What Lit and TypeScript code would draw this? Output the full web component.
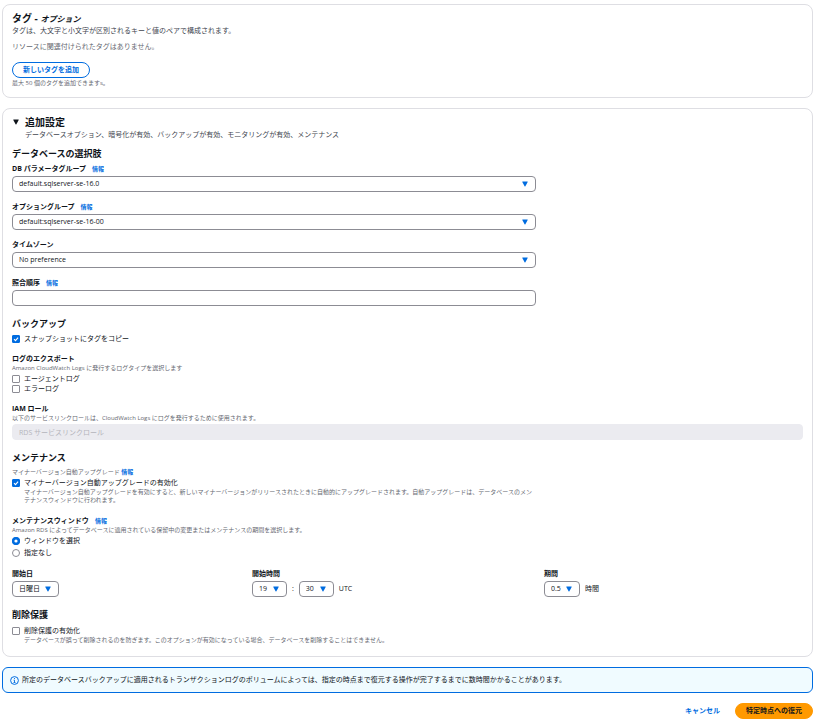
import { LitElement, html, svg, css, nothing } from "lit";
import { customElement } from "lit/decorators.js";

const caret = html`<svg class="caret" viewBox="0 0 6 6" aria-hidden="true">
  <path d="M.6 .5h4.8q.6 0 .3 .6L3.4 5.2q-.4.5-.8 0L.3 1.1Q0 .5.6.5z" fill="currentColor" />
</svg>`;

const tick = svg`<path d="M2 4.2 3.5 5.6 6.1 2.6" fill="none" stroke="#fff" stroke-width="1.1" />`;

const dot = svg`<circle cx="4" cy="4" r="4" fill="#006ce0" /><circle cx="4" cy="4" r="1.6" fill="#fff" />`;

@customElement("app-root")
export class AppRoot extends LitElement {
  static styles = css`
    :host {
      display: block;
      box-sizing: border-box;
      padding: 4px 4px 0 2px;
      background: #fff;
      color: #0f141a;
      font-family: "Open Sans", "Noto Sans CJK JP", sans-serif;
      font-size: 7px;
      line-height: 10px;
    }
    * {
      box-sizing: border-box;
    }
    h2,
    h3,
    p {
      margin: 0;
    }
    a {
      color: #006ce0;
      font-weight: 700;
      text-decoration: none;
    }
    button,
    input,
    select {
      margin: 0;
      font: inherit;
      color: inherit;
    }
    .page {
      display: flex;
      flex-direction: column;
      gap: 10px;
    }
    .card {
      border: 1px solid #dedee3;
      border-radius: 8px;
      padding: 7px 9px 12px;
    }
    .title {
      font-size: 10px;
      line-height: 12px;
      font-weight: 700;
    }
    .title em {
      font-size: 8px;
      line-height: 8px;
    }
    .tags {
      display: flex;
      flex-direction: column;
      align-items: flex-start;
      padding-bottom: 10px;
    }
    .lead {
      margin-top: 2px;
      color: #424650;
    }
    .empty {
      margin: 6px 0 10px;
      color: #656871;
    }
    .hint {
      font-size: 6px;
      line-height: 8px;
      color: #656871;
    }
    .btn + .hint {
      margin-top: 1px;
    }
    .btn {
      height: 16px;
      padding: 0 10px;
      border: 1px solid #006ce0;
      border-radius: 8px;
      background: #fff;
      color: #006ce0;
      font-weight: 700;
      line-height: 14px;
      cursor: pointer;
      white-space: nowrap;
    }
    .primary {
      background: #ff9900;
      border-color: #ff9900;
      color: #0f141a;
    }
    .link {
      border-color: transparent;
      background: none;
      padding: 0 4px;
    }
    .expander {
      display: grid;
      grid-template-columns: 8px 1fr;
      column-gap: 5px;
      align-items: center;
    }
    .expander .lead {
      grid-column: 2;
    }
    .toggle {
      display: flex;
      align-items: center;
      justify-content: center;
      width: 8px;
      height: 10px;
      padding: 0;
      border: 0;
      background: none;
    }
    .caret {
      display: block;
      width: 6px;
      height: 6px;
      color: #006ce0;
    }
    .toggle .caret {
      color: #0f141a;
    }
    .section {
      margin-top: 12px;
    }
    .first {
      margin-top: 8px;
    }
    .subtitle {
      font-size: 9px;
      line-height: 12px;
      font-weight: 700;
      margin-bottom: 4px;
    }
    .field {
      margin-top: 10px;
    }
    .subtitle + .field {
      margin-top: 0;
    }
    .label {
      display: flex;
      gap: 6px;
      font-weight: 700;
    }
    .label a,
    .hint a {
      font-size: 6px;
    }
    .control {
      position: relative;
      display: block;
      margin-top: 2px;
    }
    .wide {
      max-width: 524px;
    }
    .box {
      display: block;
      width: 100%;
      height: 16px;
      padding: 0 6px;
      border: 1px solid #8c8c94;
      border-radius: 4px;
      background: #fff;
      appearance: none;
      line-height: 14px;
    }
    .control .caret {
      position: absolute;
      right: 8px;
      top: 5px;
      pointer-events: none;
    }
    .box:disabled {
      background: #ebebf0;
      border-color: #ebebf0;
      color: #b4b4bb;
      opacity: 1;
    }
    .small {
      margin: 0;
    }
    .small .box {
      width: auto;
      padding-right: 18px;
    }
    .choice {
      display: grid;
      grid-template-columns: 8px 1fr;
      column-gap: 4px;
      align-items: center;
    }
    .choice .hint {
      grid-column: 2;
      max-width: 514px;
    }
    .hint + .choice {
      margin-top: 2px;
    }
    .radio + .radio {
      margin-top: 2px;
    }
    .mark {
      display: grid;
      width: 8px;
      height: 8px;
    }
    .mark > * {
      grid-area: 1 / 1;
      width: 8px;
      height: 8px;
    }
    .mark svg {
      display: none;
      pointer-events: none;
    }
    .mark input:checked + svg {
      display: block;
    }
    .mark input {
      appearance: none;
      border: 1px solid #8c8c94;
      border-radius: 1px;
      background: #fff;
    }
    .mark input:checked {
      background: #006ce0;
      border-color: #006ce0;
    }
    .mark input[type="radio"] {
      border-radius: 4px;
    }
    .after {
      margin-top: 12px;
    }
    .times {
      display: grid;
      grid-template-columns: 240fr 292fr 259fr;
      margin-top: 11px;
    }
    .row {
      display: flex;
      align-items: center;
      margin-top: 2px;
      gap: 5px;
    }
    .protect .subtitle {
      margin-bottom: 5px;
    }
    .alert {
      display: flex;
      align-items: center;
      gap: 3px;
      min-height: 26px;
      padding: 0 7px;
      border: 1px solid #006ce0;
      border-radius: 6px;
      background: #f0fbff;
    }
    .info {
      flex: none;
      width: 9px;
      height: 9px;
    }
    .actions {
      display: flex;
      justify-content: flex-end;
      gap: 10px;
    }
  `;

  private info() {
    return html`<a href="#info">情報</a>`;
  }

  private select(id: string, label: string, value: string, info: boolean) {
    return html`<div class="field">
      <div class="label"><label for=${id}>${label}</label>${info ? this.info() : nothing}</div>
      <div class="control wide">
        <select class="box" id=${id}><option>${value}</option></select>${caret}
      </div>
    </div>`;
  }

  private smallSelect(id: string, value: string, name: string) {
    return html`<span class="control small">
      <select class="box" id=${id} aria-label=${name}><option>${value}</option></select>${caret}
    </span>`;
  }

  private checkbox(label: string, checked: boolean, hint = "") {
    return html`<label class="choice">
      <span class="mark">
        <input type="checkbox" ?checked=${checked} />
        <svg viewBox="0 0 8 8" aria-hidden="true">${tick}</svg>
      </span>
      <span>${label}</span>
      ${hint ? html`<span class="hint">${hint}</span>` : nothing}
    </label>`;
  }

  private radio(label: string, checked: boolean) {
    return html`<label class="choice radio">
      <span class="mark">
        <input type="radio" name="window" ?checked=${checked} />
        <svg viewBox="0 0 8 8" aria-hidden="true">${dot}</svg>
      </span>
      <span>${label}</span>
    </label>`;
  }

  render() {
    return html`<main class="page">
      <section class="card tags">
        <h2 class="title">タグ - <em>オプション</em></h2>
        <p class="lead">タグは、大文字と小文字が区別されるキーと値のペアで構成されます。</p>
        <p class="empty">リソースに関連付けられたタグはありません。</p>
        <button class="btn" type="button">新しいタグを追加</button>
        <p class="hint">最大 50 個のタグを追加できますs。</p>
      </section>

      <section class="card">
        <div class="expander">
          <button class="toggle" type="button" aria-label="追加設定" aria-expanded="true">${caret}</button>
          <h2 class="title">追加設定</h2>
          <p class="lead">データベースオプション、暗号化が有効、バックアップが有効、モニタリングが有効、メンテナンス</p>
        </div>

        <div class="section first">
          <h3 class="subtitle">データベースの選択肢</h3>
          ${this.select("params", "DB パラメータグループ", "default.sqlserver-se-16.0", true)}
          ${this.select("options", "オプショングループ", "default:sqlserver-se-16-00", true)}
          ${this.select("tz", "タイムゾーン", "No preference", false)}
          <div class="field">
            <div class="label"><label for="collation">照合順序</label>${this.info()}</div>
            <div class="control wide"><input class="box" id="collation" type="text" /></div>
          </div>
        </div>

        <div class="section">
          <h3 class="subtitle">バックアップ</h3>
          ${this.checkbox("スナップショットにタグをコピー", true)}
          <div class="field">
            <div class="label">ログのエクスポート</div>
            <p class="hint">Amazon CloudWatch Logs に発行するログタイプを選択します</p>
            ${this.checkbox("エージェントログ", false)} ${this.checkbox("エラーログ", false)}
          </div>
          <div class="field">
            <div class="label"><label for="iam">IAM ロール</label></div>
            <p class="hint">以下のサービスリンクロールは、CloudWatch Logs にログを発行するために使用されます。</p>
            <div class="control"><input class="box" id="iam" type="text" value="RDS サービスリンクロール" disabled /></div>
          </div>
        </div>

        <div class="section">
          <h3 class="subtitle">メンテナンス</h3>
          <p class="hint">マイナーバージョン自動アップグレード ${this.info()}</p>
          ${this.checkbox(
            "マイナーバージョン自動アップグレードの有効化",
            true,
            "マイナーバージョン自動アップグレードを有効にすると、新しいマイナーバージョンがリリースされたときに自動的にアップグレードされます。自動アップグレードは、データベースのメンテナンスウィンドウに行われます。"
          )}
          <div class="after">
            <div class="label"><span>メンテナンスウィンドウ</span>${this.info()}</div>
            <p class="hint">Amazon RDS によってデータベースに適用されている保留中の変更またはメンテナンスの期間を選択します。</p>
            ${this.radio("ウィンドウを選択", true)} ${this.radio("指定なし", false)}
          </div>
          <div class="times">
            <div>
              <label class="label" for="day">開始日</label>
              <div class="row">${this.smallSelect("day", "日曜日", "開始日")}</div>
            </div>
            <div>
              <label class="label" for="hour">開始時間</label>
              <div class="row">
                ${this.smallSelect("hour", "19", "開始時間")}<span>:</span>${this.smallSelect("minute", "30", "分")}<span>UTC</span>
              </div>
            </div>
            <div>
              <label class="label" for="span">期間</label>
              <div class="row">${this.smallSelect("span", "0.5", "期間")}<span>時間</span></div>
            </div>
          </div>
        </div>

        <div class="section protect">
          <h3 class="subtitle">削除保護</h3>
          ${this.checkbox(
            "削除保護の有効化",
            false,
            "データベースが誤って削除されるのを防ぎます。このオプションが有効になっている場合、データベースを削除することはできません。"
          )}
        </div>
      </section>

      <div class="alert" role="status">
        <svg class="info" viewBox="0 0 9 9" aria-hidden="true">
          <circle cx="4.5" cy="4.5" r="3.9" fill="none" stroke="#006ce0" stroke-width="1" />
          <path d="M4.5 2v1M3.6 4.1h.9v2.4M3.5 6.5h2" fill="none" stroke="#006ce0" stroke-width=".9" />
        </svg>
        <span>所定のデータベースバックアップに適用されるトランザクションログのボリュームによっては、指定の時点まで復元する操作が完了するまでに数時間かかることがあります。</span>
      </div>

      <div class="actions">
        <button class="btn link" type="button">キャンセル</button>
        <button class="btn primary" type="button">特定時点への復元</button>
      </div>
    </main>`;
  }
}
